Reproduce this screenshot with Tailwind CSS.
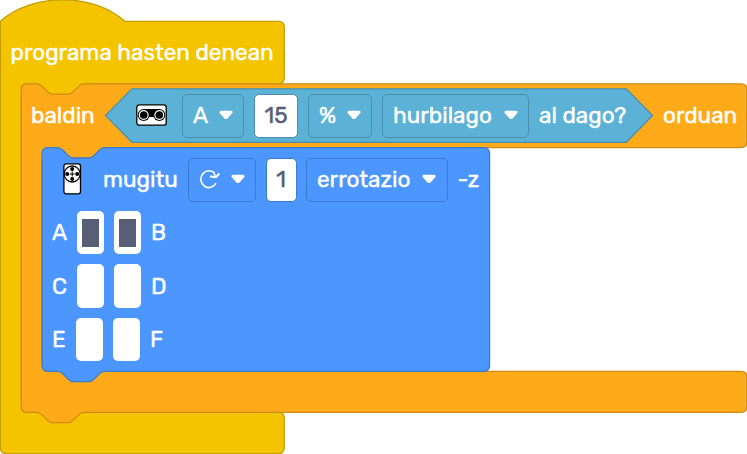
<!DOCTYPE html>
<html lang="eu">
<head>
<meta charset="utf-8">
<title>Blokeak</title>
<script src="https://cdn.jsdelivr.net/npm/@tailwindcss/browser@4"></script>
</head>
<body class="bg-white">
<main class="relative w-[747px] h-[454px] overflow-hidden font-['Rubik','Roboto',sans-serif] font-normal text-[22.5px] leading-none text-white whitespace-nowrap [-webkit-text-stroke:0.4px_currentColor] [&_span]:pt-[1.5px]">
  <!-- Block outlines -->
  <svg class="absolute inset-0" width="747" height="454" viewBox="0 0 747 454">
    <g transform="translate(0.4 21.3) scale(1.302)" stroke-width="1">
      <path fill="#f5c400" stroke="#c49d00" d="M0 0C25-22 71-22 95.5 0H214a4 4 0 0 1 4 4V44a4 4 0 0 1-4 4H16V300.3H214a4 4 0 0 1 4 4V328a4 4 0 0 1-4 4H4a4 4 0 0 1-4-4Z"/>
      <path fill="#f5c400" d="M15 49V47H68V58H15V49ZM15 290H22V302H15Z"/>
      <path fill="#ffab19" stroke="#cf8b17" d="M16 52a4 4 0 0 1 4-4h8c2 0 3 1 4 2l4 4c1 1 2 2 4 2h12c2 0 3-1 4-2l4-4c1-1 2-2 4-2H569.3a4 4 0 0 1 4 4V93a4 4 0 0 1-4 4H32V268.8H569.3a4 4 0 0 1 4 4V296.3a4 4 0 0 1-4 4H64c-2 0-3 1-4 2l-4 4c-1 1-2 2-4 2H40c-2 0-3-1-4-2l-4-4c-1-1-2-2-4-2H20a4 4 0 0 1-4-4Z"/>
      <path fill="#ffab19" d="M31 96.5H84V107H31ZM31 260H38V270H31Z"/>
      <path fill="#4c97ff" stroke="#3d79cc" d="M32 101a4 4 0 0 1 4-4h8c2 0 3 1 4 2l4 4c1 1 2 2 4 2h12c2 0 3-1 4-2l4-4c1-1 2-2 4-2H371.7a4 4 0 0 1 4 4V264.8a4 4 0 0 1-4 4H80c-2 0-3 1-4 2l-4 4c-1 1-2 2-4 2H56c-2 0-3-1-4-2l-4-4c-1-1-2-2-4-2H36a4 4 0 0 1-4-4Z"/>
    </g>
    <path fill="#5cb1d6" stroke="#4a8eab" stroke-width="1.3" d="M132 88.8H626.3L652.5 115.6 626.3 142.3H132L105.5 115.6Z"/>
    <symbol id="caret" viewBox="0 0 14 11"><path d="M2 1.8H12Q14.6 2.2 13 4.2L8.6 9.2Q7 10.8 5.4 9.2L1 4.2Q-.6 2.2 2 1.8Z" fill="#231f20" opacity=".12"/><path d="M1.8 .8H12.2Q14.6 1.2 13 3.4L8.6 8.4Q7 10 5.4 8.4L1 3.4Q-.6 1.2 1.8 .8Z" fill="#fff"/></symbol>
  </svg>

  <div class="relative flex flex-col">
    <header class="h-[84px] pl-[10.5px] pt-[21px] flex items-center"><span>programa hasten denean</span></header>

    <section class="h-[63px] mb-[1px] pl-[31px] flex items-center">
      <span class="w-[105px]">baldin</span>
      <svg class="w-[31px] h-[22px] mr-[15px] shrink-0 -mt-[1px]" viewBox="0 0 31 22">
        <rect x=".8" y=".8" width="29.4" height="20.4" rx="2.5" fill="#fff" stroke="#000" stroke-width="1.3"/>
        <path d="M8 5H23V14H19L18 13H13L12 14H8Z"/>
        <g fill="#000"><circle cx="7.7" cy="11" r="6"/><circle cx="23.3" cy="11" r="6"/></g>
        <g fill="none" stroke="#fff" stroke-width="1.2"><circle cx="7.7" cy="11" r="4.4"/><circle cx="23.3" cy="11" r="4.4"/></g>
      </svg>
      <div class="w-[62px] h-[44px] rounded-[5px] border border-[#4a8eab] mr-[10px] pl-[10px] pr-[10px] flex items-center justify-between"><span>A</span><svg class="w-[14px] h-[11px]"><use href="#caret"/></svg></div>
      <div class="w-[44px] h-[44px] rounded-[5px] border border-[#4a8eab] bg-white text-[#575e75] mr-[10px] flex items-center justify-center"><span>15</span></div>
      <div class="w-[64px] h-[44px] rounded-[5px] border border-[#4a8eab] mr-[10px] pl-[10px] pr-[10px] flex items-center justify-between"><span>%</span><svg class="w-[14px] h-[11px]"><use href="#caret"/></svg></div>
      <div class="w-[147px] h-[44px] rounded-[5px] border border-[#4a8eab] mr-[10px] pl-[10px] pr-[10px] flex items-center justify-between"><span>hurbilago</span><svg class="w-[14px] h-[11px]"><use href="#caret"/></svg></div>
      <span class="w-[124px]">al dago?</span>
      <span>orduan</span>
    </section>

    <section class="h-[63px] pl-[63px] flex items-center">
      <svg class="w-[19px] h-[32px] mr-[21px] -mt-[2px]" viewBox="0 0 19 32">
        <rect x=".9" y=".8" width="16.6" height="30" rx="2.2" fill="#fff" stroke="#000" stroke-width="1.3"/>
        <circle cx="9.2" cy="11" r="8" fill="#fff" stroke="#000" stroke-width="1.3"/>
        <circle cx="9.2" cy="6" r="2"/><circle cx="9.2" cy="16" r="2"/><circle cx="4.2" cy="11" r="2"/><circle cx="14.2" cy="11" r="2"/>
        <path d="M9.2 8.5V13.5M6.7 11H11.7" stroke="#000" stroke-width="1"/>
      </svg>
      <span class="w-[84.5px]">mugitu</span>
      <div class="w-[68px] h-[44px] rounded-[5px] border border-[#3d79cc] mr-[10px] pl-[10px] pr-[10px] flex items-center justify-between">
        <svg class="w-[22px] h-[20px] -mt-[2px]" viewBox="0 0 22 20" fill="none" stroke="#fff" stroke-width="1.6"><path d="M15.5 4.2A8 8.4 0 1 0 17 14"/><path d="M11 7.6L17 8.1L20.3 4.5" stroke-width="2"/><path d="M14 2L17 8"/></svg>
        <svg class="w-[14px] h-[11px]"><use href="#caret"/></svg>
      </div>
      <div class="w-[31px] h-[44px] rounded-[5px] border border-[#3d79cc] bg-white text-[#575e75] mr-[9px] flex items-center justify-center"><span>1</span></div>
      <div class="w-[142px] h-[44px] rounded-[5px] border border-[#3d79cc] mr-[10px] pl-[10.5px] pr-[11px] flex items-center justify-between"><span>errotazio</span><svg class="w-[14px] h-[11px]"><use href="#caret"/></svg></div>
      <span>-z</span>
    </section>

    <section class="pl-[52px] flex flex-col gap-[10px]">
      <div class="h-[43px] flex items-center">
        <span class="w-[25px]">A</span>
        <div class="w-[27px] h-[43px] rounded-[5px] bg-white mr-[10px] flex items-center justify-center"><i class="w-[17px] h-[28px] bg-[#575e75]"></i></div>
        <div class="w-[27px] h-[43px] rounded-[5px] bg-white mr-[10px] flex items-center justify-center"><i class="w-[17px] h-[28px] bg-[#575e75]"></i></div>
        <span>B</span>
      </div>
      <div class="h-[44px] flex items-center">
        <span class="w-[25px]">C</span>
        <div class="w-[27px] h-[44px] rounded-[5px] bg-white mr-[10px]"></div>
        <div class="w-[27px] h-[44px] rounded-[5px] bg-white mr-[10px]"></div>
        <span>D</span>
      </div>
      <div class="h-[43px] flex items-center">
        <span class="w-[24px]">E</span>
        <div class="w-[27px] h-[43px] rounded-[5px] bg-white mr-[10px]"></div>
        <div class="w-[27px] h-[43px] rounded-[5px] bg-white mr-[10px]"></div>
        <span>F</span>
      </div>
    </section>
  </div>
</main>
</body>
</html>
